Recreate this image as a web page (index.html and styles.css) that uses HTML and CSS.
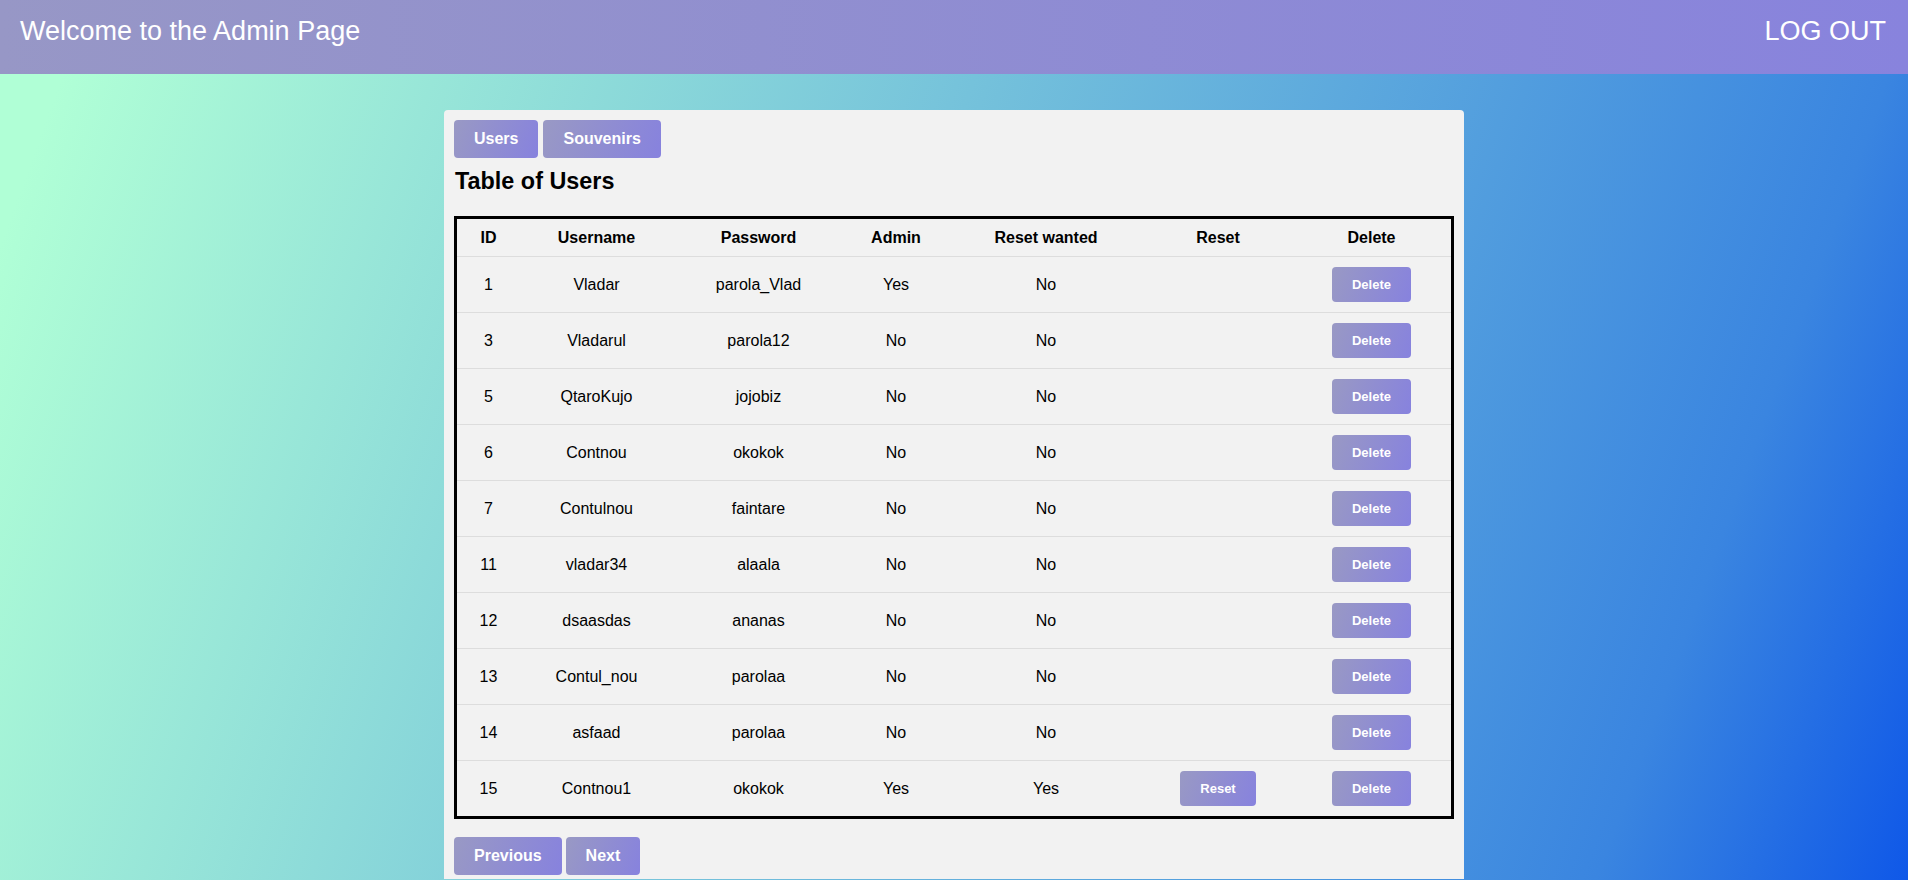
FILE: index.html
```html
<!DOCTYPE html>
<html lang="en">
<head>
<meta charset="utf-8">
<title>Admin Page</title>
<link rel="stylesheet" href="styles.css">
</head>
<body>
<header class="topbar">
  <div class="topbar-title">Welcome to the Admin Page</div>
  <div class="topbar-logout">LOG OUT</div>
</header>
<main class="card">
  <nav class="tabs">
    <button class="btn btn-lg">Users</button>
    <button class="btn btn-lg">Souvenirs</button>
  </nav>
  <h2 class="title">Table of Users</h2>
  <table class="users">
    <colgroup>
      <col class="c-id"><col class="c-user"><col class="c-pass"><col class="c-admin"><col class="c-want"><col class="c-reset"><col class="c-del">
    </colgroup>
    <thead>
      <tr><th>ID</th><th>Username</th><th>Password</th><th>Admin</th><th>Reset wanted</th><th>Reset</th><th>Delete</th></tr>
    </thead>
    <tbody>
      <tr><td>1</td><td>Vladar</td><td>parola_Vlad</td><td>Yes</td><td>No</td><td></td><td><button class="btn btn-sm">Delete</button></td></tr>
      <tr><td>3</td><td>Vladarul</td><td>parola12</td><td>No</td><td>No</td><td></td><td><button class="btn btn-sm">Delete</button></td></tr>
      <tr><td>5</td><td>QtaroKujo</td><td>jojobiz</td><td>No</td><td>No</td><td></td><td><button class="btn btn-sm">Delete</button></td></tr>
      <tr><td>6</td><td>Contnou</td><td>okokok</td><td>No</td><td>No</td><td></td><td><button class="btn btn-sm">Delete</button></td></tr>
      <tr><td>7</td><td>Contulnou</td><td>faintare</td><td>No</td><td>No</td><td></td><td><button class="btn btn-sm">Delete</button></td></tr>
      <tr><td>11</td><td>vladar34</td><td>alaala</td><td>No</td><td>No</td><td></td><td><button class="btn btn-sm">Delete</button></td></tr>
      <tr><td>12</td><td>dsaasdas</td><td>ananas</td><td>No</td><td>No</td><td></td><td><button class="btn btn-sm">Delete</button></td></tr>
      <tr><td>13</td><td>Contul_nou</td><td>parolaa</td><td>No</td><td>No</td><td></td><td><button class="btn btn-sm">Delete</button></td></tr>
      <tr><td>14</td><td>asfaad</td><td>parolaa</td><td>No</td><td>No</td><td></td><td><button class="btn btn-sm">Delete</button></td></tr>
      <tr><td>15</td><td>Contnou1</td><td>okokok</td><td>Yes</td><td>Yes</td><td><button class="btn btn-sm">Reset</button></td><td><button class="btn btn-sm">Delete</button></td></tr>
    </tbody>
  </table>
  <div class="pager">
    <button class="btn btn-lg">Previous</button>
    <button class="btn btn-lg">Next</button>
  </div>
</main>
</body>
</html>
```
FILE: styles.css
```css
html, body {
  margin: 0;
  padding: 0;
}
body {
  height: 880px;
  overflow: hidden;
  font-family: "Liberation Sans", Arial, sans-serif;
  background: linear-gradient(110deg, #b0ffd6 4%, #3a85e0 86%, #0f58e8 100%);
}
.topbar {
  height: 74px;
  box-sizing: border-box;
  padding: 15px 22px 0 20px;
  display: flex;
  justify-content: space-between;
  align-items: flex-start;
  background: linear-gradient(to right, #9797c6, #8883dd);
  color: #ffffff;
  font-size: 27px;
  line-height: 32px;
}
.card {
  width: 1020px;
  box-sizing: border-box;
  margin: 36px auto 0;
  padding: 10px 10px 4px 10px;
  background: #f2f2f2;
  border-radius: 4px 4px 0 0;
}
.tabs, .pager {
  display: flex;
  gap: 5px;
}
.pager {
  gap: 4px;
  margin-top: 18px;
}
.btn {
  border: none;
  border-radius: 4px;
  color: #ffffff;
  font-family: "Liberation Sans", Arial, sans-serif;
  font-weight: bold;
  background: linear-gradient(110deg, #9999c4, #8782de);
  cursor: pointer;
}
.btn-lg {
  height: 38px;
  padding: 0 20px;
  font-size: 16px;
}
.btn-sm {
  height: 35px;
  padding: 0 20px;
  font-size: 13px;
}
.title {
  margin: 11px 0 0 1px;
  font-size: 23.4px;
  line-height: 25px;
  font-weight: bold;
  color: #000;
}
.users {
  margin-top: 22px;
  width: 1000px;
  table-layout: fixed;
  border-collapse: separate;
  border-spacing: 0;
  border: 3px solid #000;
  font-size: 16px;
  color: #000;
}
.c-id { width: 63px; }
.c-user { width: 153px; }
.c-pass { width: 171px; }
.c-admin { width: 104px; }
.c-want { width: 196px; }
.c-reset { width: 148px; }
.c-del { width: 159px; }
.users th {
  height: 37px;
  padding: 0;
  font-weight: bold;
  text-align: center;
  vertical-align: middle;
  border-bottom: 1px solid #dddddd;
}
.users td {
  height: 55px;
  padding: 0;
  text-align: center;
  vertical-align: middle;
  border-bottom: 1px solid #dddddd;
}
.users tbody tr:last-child td {
  border-bottom: none;
}
```
